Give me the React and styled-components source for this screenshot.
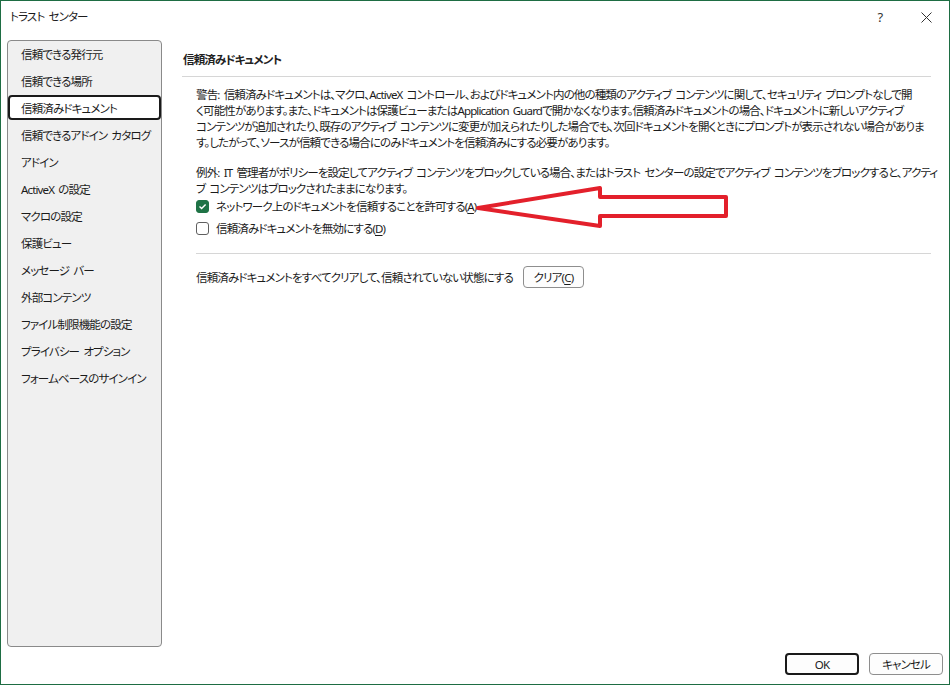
import React from 'react'
import styled, { createGlobalStyle } from 'styled-components'

const Global = createGlobalStyle`
  html, body { margin: 0; padding: 0; background: #fff; }
  body {
    font-family: "Noto Sans", "Noto Sans CJK JP", sans-serif;
    font-size: 11.5px;
    letter-spacing: -0.85px;
    word-spacing: 2px;
    color: #1b1b1b;
    font-feature-settings: "palt";
  }
`

const Window = styled.div`
  position: relative;
  width: 950px;
  height: 685px;
  box-sizing: border-box;
  border: 1px solid #1e6d43;
  display: flex;
  flex-direction: column;
  background: #fff;
  overflow: hidden;
`

const TitleBar = styled.div`
  height: 39px;
  display: flex;
  align-items: flex-start;
  padding: 8px 0 0 9px;
  box-sizing: border-box;
  line-height: 16px;
`

const Title = styled.div`
  flex: 1;
`

const TitleButton = styled.div`
  width: 46px;
  height: 16px;
  display: flex;
  align-items: center;
  justify-content: center;
  font-size: 13px;
  color: #333;
`

const Middle = styled.div`
  flex: 1;
  display: flex;
  padding: 0 0 0 6px;
  min-height: 0;
`

const Sidebar = styled.div`
  width: 155px;
  flex-shrink: 0;
  box-sizing: border-box;
  background: #f0f0f0;
  border: 1px solid #8a8a8a;
  border-radius: 4px;
`

const NavItem = styled.div`
  height: 25px;
  margin-bottom: 2px;
  box-sizing: border-box;
  border: 2px solid ${p => (p.$active ? '#1a1a1a' : 'transparent')};
  border-radius: 4px;
  background: ${p => (p.$active ? '#fff' : 'transparent')};
  padding-left: 11px;
  display: flex;
  align-items: center;
  white-space: nowrap;
`

const Main = styled.div`
  flex: 1;
  min-width: 0;
  padding: 12px 18px 0 20px;
`

const Heading = styled.div`
  line-height: 16px;
  padding: 0 0 8px 1px;
  border-bottom: 1px solid #d6d6d6;
  font-weight: 600;
  color: #222;
`

const Section = styled.div`
  padding-left: 14px;
`

const Para = styled.div`
  line-height: 16px;
  margin-top: ${p => p.$top}px;
`

const Line = styled.div`
  white-space: nowrap;
`

const CheckRow = styled.label`
  display: flex;
  align-items: center;
  height: 22px;
  gap: 7px;
  margin-top: ${p => p.$top || 0}px;
`

const Box = styled.span`
  width: 13px;
  height: 13px;
  box-sizing: border-box;
  border-radius: 3px;
  border: 1px solid ${p => (p.$checked ? '#1f7346' : '#5f5f5f')};
  background: ${p => (p.$checked ? '#1f7346' : '#fff')};
  display: inline-flex;
  align-items: center;
  justify-content: center;
`

const Key = styled.span`
  text-decoration: underline;
  text-underline-offset: 2px;
`

const Divider = styled.div`
  height: 1px;
  background: #d6d6d6;
  margin-top: ${p => p.$top}px;
`

const ClearRow = styled.div`
  display: flex;
  align-items: center;
  gap: 10px;
  margin-top: 12px;
`

const SmallButton = styled.button`
  font: inherit;
  letter-spacing: inherit;
  color: inherit;
  height: 22px;
  width: 61px;
  padding: 0;
  background: #fdfdfd;
  border: 1px solid #8e8e8e;
  border-radius: 4px;
`

const Footer = styled.div`
  height: 37px;
  display: flex;
  justify-content: flex-end;
  align-items: flex-start;
  gap: 10px;
  padding: 6px 6px 0 0;
  box-sizing: border-box;
`

const DialogButton = styled.button`
  font: inherit;
  letter-spacing: inherit;
  color: inherit;
  width: 74px;
  height: 22px;
  box-sizing: border-box;
  background: #fdfdfd;
  border: ${p => (p.$primary ? '2px solid #1a1a1a' : '1px solid #8e8e8e')};
  border-radius: 4px;
`

const Overlay = styled.svg`
  position: absolute;
  left: 0;
  top: 0;
  pointer-events: none;
`

const navItems = [
  '信頼できる発行元',
  '信頼できる場所',
  '信頼済みドキュメント',
  '信頼できるアドイン カタログ',
  'アドイン',
  'ActiveX の設定',
  'マクロの設定',
  '保護ビュー',
  'メッセージ バー',
  '外部コンテンツ',
  'ファイル制限機能の設定',
  'プライバシー オプション',
  'フォームベースのサインイン',
]

const warning = [
  '警告: 信頼済みドキュメントは、マクロ、ActiveX コントロール、およびドキュメント内の他の種類のアクティブ コンテンツに関して、セキュリティ プロンプトなしで開',
  'く可能性があります。また、ドキュメントは保護ビューまたはApplication Guardで開かなくなります。信頼済みドキュメントの場合、ドキュメントに新しいアクティブ',
  'コンテンツが追加されたり、既存のアクティブ コンテンツに変更が加えられたりした場合でも、次回ドキュメントを開くときにプロンプトが表示されない場合がありま',
  'す。したがって、ソースが信頼できる場合にのみドキュメントを信頼済みにする必要があります。',
]

const exception = [
  '例外: IT 管理者がポリシーを設定してアクティブ コンテンツをブロックしている場合、またはトラスト センターの設定でアクティブ コンテンツをブロックすると、アクティ',
  'ブ コンテンツはブロックされたままになります。',
]

function Check({ checked }) {
  return (
    <Box $checked={checked}>
      {checked && (
        <svg width="9" height="9" viewBox="0 0 9 9">
          <path d="M1.5 4.6 L3.6 6.6 L7.6 2.4" fill="none" stroke="#fff" strokeWidth="1.4" />
        </svg>
      )}
    </Box>
  )
}

export default function App() {
  return (
    <>
      <Global />
      <Window>
        <TitleBar>
          <Title>トラスト センター</Title>
          <TitleButton>?</TitleButton>
          <TitleButton>
            <svg width="11" height="11" viewBox="0 0 11 11">
              <path d="M0.5 0.5 L10.5 10.5 M10.5 0.5 L0.5 10.5" stroke="#333" strokeWidth="1" />
            </svg>
          </TitleButton>
        </TitleBar>
        <Middle>
          <Sidebar>
            {navItems.map((t, i) => (
              <NavItem key={t} $active={i === 2}>{t}</NavItem>
            ))}
          </Sidebar>
          <Main>
            <Heading>信頼済みドキュメント</Heading>
            <Section>
              <Para $top={10}>
                {warning.map(l => <Line key={l}>{l}</Line>)}
              </Para>
              <Para $top={14}>
                {exception.map(l => <Line key={l}>{l}</Line>)}
              </Para>
              <CheckRow $top={-2}>
                <Check checked />
                <span>ネットワーク上のドキュメントを信頼することを許可する(<Key>A</Key>)</span>
              </CheckRow>
              <CheckRow>
                <Check />
                <span>信頼済みドキュメントを無効にする(<Key>D</Key>)</span>
              </CheckRow>
              <Divider $top={14} />
              <ClearRow>
                <span>信頼済みドキュメントをすべてクリアして、信頼されていない状態にする</span>
                <SmallButton>クリア(<Key>C</Key>)</SmallButton>
              </ClearRow>
            </Section>
          </Main>
        </Middle>
        <Footer>
          <DialogButton $primary>OK</DialogButton>
          <DialogButton>キャンセル</DialogButton>
        </Footer>
        <Overlay width="950" height="685" viewBox="0 0 950 685">
          <polygon
            points="477,207 599,187 599,196 725,196 725,215 599,215 599,225"
            fill="none"
            stroke="#e3202b"
            strokeWidth="4"
            strokeLinejoin="round"
          />
        </Overlay>
      </Window>
    </>
  )
}
